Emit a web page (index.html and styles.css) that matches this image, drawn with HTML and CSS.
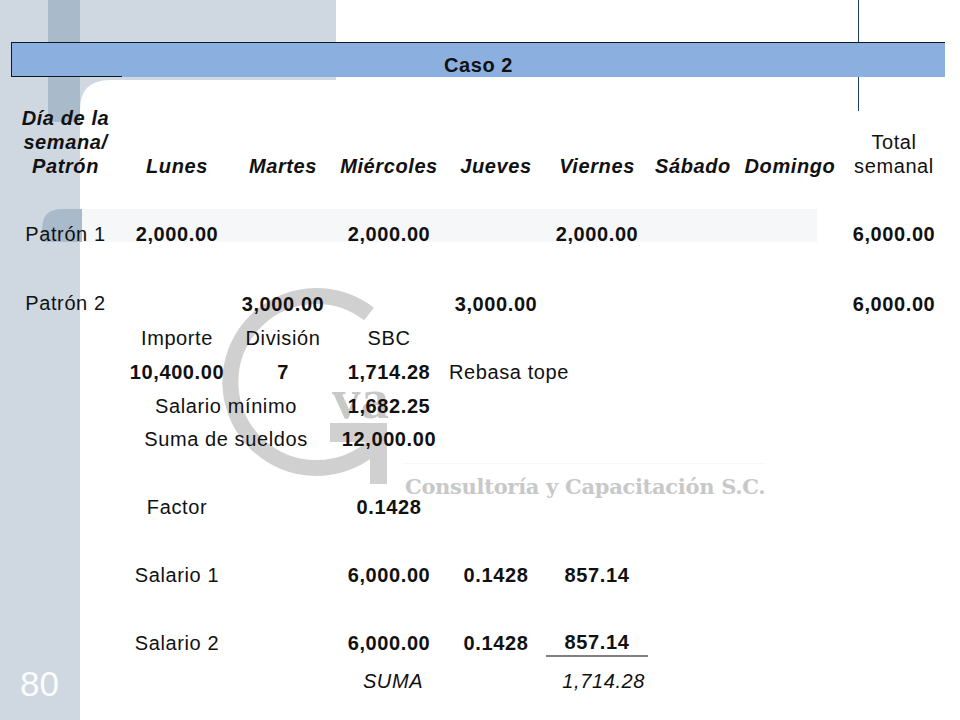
FILE: index.html
```html
<!DOCTYPE html>
<html lang="es">
<head>
<meta charset="utf-8">
<title>Caso 2</title>
<link rel="stylesheet" href="styles.css">
</head>
<body>
<div class="backdrop">
  <svg class="art" width="960" height="720" viewBox="0 0 960 720" aria-hidden="true">
    <path class="slate" d="M0 0H336V80H110Q80 80 80 110V720H0Z"/>
    <rect class="stripe" x="48" y="0" width="32" height="122"/>
    <path class="stripe-soft" d="M42 242V229Q42 209 62 209H82V242Z"/>
    <rect class="wash" x="82" y="209" width="735" height="33"/>
    <path class="rule" d="M858.5 0V111"/>
    <path class="g-arc" d="M369 314A86 86 0 1 0 376 444"/>
    <path class="g-bar" d="M330 423H387V484H370V442H330Z"/>
    <rect class="logo-box" x="403" y="463" width="362" height="1"/>
    <text class="logo-va" x="332" y="418">va</text>
    <text class="logo-name" x="405" y="494">Consultoría y Capacitación S.C.</text>
    <text class="page-no" x="20" y="696">80</text>
  </svg>
</div>
<main class="sheet">
  <h1 class="band">Caso 2</h1>
  <table class="grid">
    <colgroup>
      <col class="c-a"><col class="c-b"><col class="c-c"><col class="c-d"><col class="c-e"><col class="c-f"><col class="c-g"><col class="c-h"><col class="c-i">
    </colgroup>
    <tr class="r-head">
      <th>Día de la semana/ Patrón</th><th>Lunes</th><th>Martes</th><th>Miércoles</th><th>Jueves</th><th>Viernes</th><th>Sábado</th><th>Domingo</th><td class="total">Total semanal</td>
    </tr>
    <tr class="r-39"><td colspan="9"></td></tr>
    <tr class="r-34">
      <td>Patrón 1</td><td class="num">2,000.00</td><td></td><td class="num">2,000.00</td><td></td><td class="num">2,000.00</td><td></td><td></td><td class="num">6,000.00</td>
    </tr>
    <tr class="r-36"><td colspan="9"></td></tr>
    <tr class="r-34">
      <td class="lift">Patrón 2</td><td></td><td class="num">3,000.00</td><td></td><td class="num">3,000.00</td><td></td><td></td><td></td><td class="num">6,000.00</td>
    </tr>
    <tr class="r-34">
      <td></td><td>Importe</td><td>División</td><td>SBC</td><td colspan="5"></td>
    </tr>
    <tr class="r-34">
      <td></td><td class="num">10,400.00</td><td class="num">7</td><td class="num">1,714.28</td><td class="note" colspan="2">Rebasa tope</td><td colspan="3"></td>
    </tr>
    <tr class="r-33">
      <td></td><td colspan="2">Salario mínimo</td><td class="num">1,682.25</td><td colspan="5"></td>
    </tr>
    <tr class="r-34">
      <td></td><td colspan="2">Suma de sueldos</td><td class="num">12,000.00</td><td colspan="5"></td>
    </tr>
    <tr class="r-34"><td colspan="9"></td></tr>
    <tr class="r-34">
      <td></td><td>Factor</td><td></td><td class="num">0.1428</td><td colspan="5"></td>
    </tr>
    <tr class="r-34"><td colspan="9"></td></tr>
    <tr class="r-34">
      <td></td><td>Salario 1</td><td></td><td class="num">6,000.00</td><td class="num">0.1428</td><td class="num">857.14</td><td colspan="3"></td>
    </tr>
    <tr class="r-37"><td colspan="9"></td></tr>
    <tr class="r-27">
      <td></td><td>Salario 2</td><td></td><td class="num">6,000.00</td><td class="num">0.1428</td><td class="num underlined">857.14</td><td colspan="3"></td>
    </tr>
    <tr class="r-49">
      <td></td><td></td><td></td><td class="sum-label">SUMA</td><td></td><td class="sum-value">1,714.28</td><td colspan="3"></td>
    </tr>
  </table>
</main>
</body>
</html>
```

FILE: styles.css
```css
html, body {
  margin: 0;
  padding: 0;
  height: 720px;
  overflow: hidden;
  background: #fff;
}
body {
  position: relative;
  font-family: "Liberation Sans", Arial, sans-serif;
  color: #111;
}
.backdrop {
  position: absolute;
  inset: 0;
}
.art {
  display: block;
}
.slate { fill: #cfd8e1; }
.stripe { fill: #a9bacb; }
.stripe-soft { fill: #a9bacb; }
.wash { fill: #f5f7f9; }
.rule { stroke: #1c3c5c; stroke-width: 1; fill: none; }
.g-arc { stroke: #d0d0d0; stroke-width: 16; fill: none; }
.g-bar { fill: #d0d0d0; }
.logo-box { fill: #f8f8f8; }
.logo-va {
  font-family: "Liberation Serif", serif;
  font-weight: 700;
  font-size: 57px;
  fill: #c8c8c8;
}
.logo-name {
  font-family: "DejaVu Serif", serif;
  font-weight: 700;
  font-size: 21px;
  letter-spacing: -.3px;
  fill: #c8c8c8;
}
.page-no {
  font-family: "Liberation Sans", Arial, sans-serif;
  font-size: 35px;
  fill: #fbfcfd;
}
.sheet {
  position: relative;
  padding: 42px 0 0 11px;
}
.band {
  box-sizing: border-box;
  width: 934px;
  height: 35px;
  margin: 0 0 29px;
  border-top: 1px solid #101820;
  border-left: 1px solid #101820;
  background: #8bb0e0 linear-gradient(#101820, #101820) no-repeat left bottom / 110px 1px;
  font-size: 20px;
  font-weight: 700;
  line-height: 44px;
  letter-spacing: .6px;
  text-align: center;
}
.grid {
  table-layout: fixed;
  width: 935px;
  border-collapse: collapse;
  font-size: 20px;
  line-height: 24px;
  letter-spacing: .6px;
}
.grid th, .grid td {
  padding: 0;
  text-align: center;
  vertical-align: middle;
}
.grid th {
  font-style: italic;
  font-weight: 700;
  vertical-align: bottom;
}
.grid td.total { vertical-align: bottom; }
.c-a { width: 109px; }
.c-b { width: 114px; }
.c-c { width: 98px; }
.c-d { width: 114px; }
.c-e { width: 100px; }
.c-f { width: 102px; }
.c-g { width: 90px; }
.c-h { width: 104px; }
.c-i { width: 104px; }
.r-head { height: 72px; }
.r-39 { height: 39px; }
.r-36 { height: 36px; }
.r-34 { height: 34px; }
.r-33 { height: 33px; }
.r-37 { height: 37px; }
.r-27 { height: 27px; }
.r-49 { height: 49px; }
.grid .num { font-weight: 700; }
.grid .lift { padding-bottom: 2px; }
.grid .note {
  padding-left: 3px;
  text-align: left;
}
.grid .underlined { border-bottom: 2px solid #808080; }
.grid .sum-label {
  padding-left: 8px;
  font-style: italic;
}
.grid .sum-value {
  padding-right: 3px;
  font-style: italic;
  text-align: right;
}
```
